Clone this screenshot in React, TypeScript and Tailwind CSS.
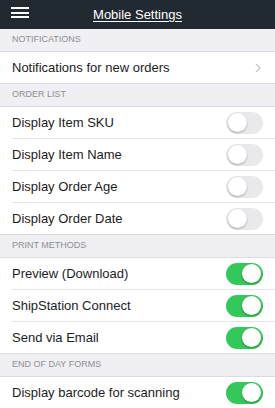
import React from "react"

type Row = { label: string; kind: "chevron" | "toggle"; on?: boolean }
type Section = { title: string; rows: Row[] }

const sections: Section[] = [
  {
    title: "NOTIFICATIONS",
    rows: [{ label: "Notifications for new orders", kind: "chevron" }],
  },
  {
    title: "ORDER LIST",
    rows: [
      { label: "Display Item SKU", kind: "toggle", on: false },
      { label: "Display Item Name", kind: "toggle", on: false },
      { label: "Display Order Age", kind: "toggle", on: false },
      { label: "Display Order Date", kind: "toggle", on: false },
    ],
  },
  {
    title: "PRINT METHODS",
    rows: [
      { label: "Preview (Download)", kind: "toggle", on: true },
      { label: "ShipStation Connect", kind: "toggle", on: true },
      { label: "Send via Email", kind: "toggle", on: true },
    ],
  },
  {
    title: "END OF DAY FORMS",
    rows: [{ label: "Display barcode for scanning", kind: "toggle", on: true }],
  },
]

function Toggle({ on }: { on: boolean }) {
  return (
    <div
      className={
        on
          ? "w-[37px] h-[22px] rounded-full bg-[#34c759] flex items-center justify-end p-[2px]"
          : "w-[37px] h-[22px] rounded-full bg-[#e9e9eb] flex items-center justify-start p-[2px]"
      }
    >
      <div className="w-[19px] h-[19px] rounded-full bg-white shadow-[0_1px_2px_rgba(0,0,0,0.3)]" />
    </div>
  )
}

export default function App() {
  return (
    <div className="w-[275px] h-[408px] overflow-hidden bg-[#efeff4] font-['Liberation_Sans',Arial,sans-serif]">
      <div className="h-[29px] bg-[#222a31] flex items-center relative">
        <div className="absolute left-[11px] top-[7px] flex flex-col gap-[2.5px]">
          <div className="w-[18px] h-[2px] bg-white" />
          <div className="w-[18px] h-[2px] bg-white" />
          <div className="w-[18px] h-[2px] bg-white" />
        </div>
        <div className="w-full text-center text-white text-[13px] underline underline-offset-2">
          Mobile Settings
        </div>
      </div>
      {sections.map((s) => (
        <div key={s.title}>
          <div className="h-[23px] flex items-center px-3 text-[9px] text-[#8e8e93] border-b border-[#dcdce0]">
            {s.title}
          </div>
          <div className="bg-white pl-3 border-b border-[#dcdce0]">
            {s.rows.map((r, i) => (
              <div
                key={r.label}
                className={
                  i < s.rows.length - 1
                    ? "h-[32px] flex items-center justify-between pr-[12px] border-b border-[#e3e3e6] text-[13px] text-[#1c1c1e]"
                    : "h-[31px] flex items-center justify-between pr-[12px] text-[13px] text-[#1c1c1e]"
                }
              >
                <span>{r.label}</span>
                {r.kind === "chevron" ? (
                  <svg width="6" height="10" viewBox="0 0 6 10" className="mr-[2px]">
                    <path d="M1 1l4 4-4 4" fill="none" stroke="#c7c7cc" strokeWidth="1.3" />
                  </svg>
                ) : (
                  <Toggle on={!!r.on} />
                )}
              </div>
            ))}
          </div>
        </div>
      ))}
    </div>
  )
}
